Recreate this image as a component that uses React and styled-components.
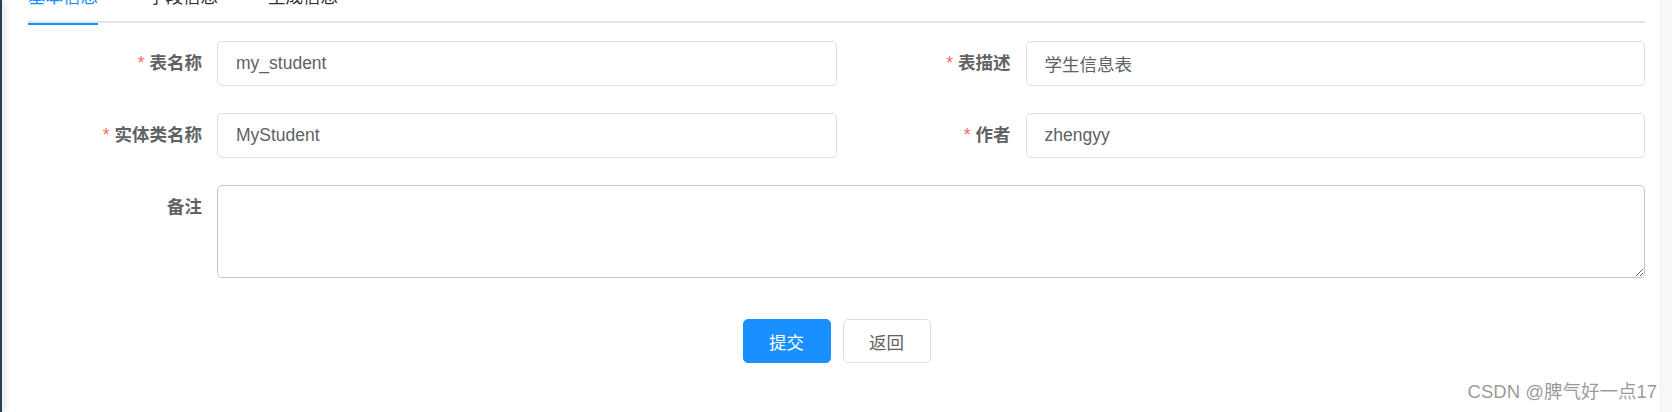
import React from "react";
import styled, { createGlobalStyle } from "styled-components";

const GlobalStyle = createGlobalStyle`
  html, body {
    margin: 0;
    padding: 0;
    background: #fff;
    overflow: hidden;
  }
  body {
    font-family: "Liberation Sans", "Noto Sans CJK SC", sans-serif;
  }
`;

const Layout = styled.div`
  display: flex;
  height: 412px;
  position: relative;
`;

const SideEdge = styled.div`
  width: 2px;
  flex-shrink: 0;
  background: #2f3b4f;
  box-shadow: 2px 0 6px rgba(0, 21, 41, 0.3);
  z-index: 1;
`;

const ScrollTrack = styled.div`
  width: 11px;
  flex-shrink: 0;
  background: #f6f7f9;
  border-left: 1px solid #f0f1f3;
`;

const Main = styled.main`
  flex: 1;
  padding: 0 15px 0 26px;
  overflow: hidden;
`;

const TabNav = styled.div`
  display: flex;
  height: 50px;
  margin-top: -27px;
  border-bottom: 2px solid #e4e7ed;
  box-sizing: border-box;
  margin-bottom: 18px;
`;

const Tab = styled.div`
  height: 50px;
  line-height: 48px;
  padding: 0 25px;
  font-size: 17.5px;
  color: ${(p) => (p.$active ? "#1890ff" : "#303133")};
  position: relative;
  box-sizing: border-box;

  &:first-child {
    padding-left: 0;
  }

  &::after {
    content: "";
    display: ${(p) => (p.$active ? "block" : "none")};
    position: absolute;
    left: 0;
    right: 25px;
    bottom: -2px;
    height: 2px;
    background: #1890ff;
  }
`;

const Grid = styled.div`
  display: grid;
  grid-template-columns: 1fr 1fr;
  row-gap: 27px;
`;

const Item = styled.div`
  display: flex;
  align-items: flex-start;
  grid-column: ${(p) => (p.$full ? "1 / 3" : "auto")};
`;

const Label = styled.label`
  width: 189px;
  flex-shrink: 0;
  box-sizing: border-box;
  padding-right: 15px;
  text-align: right;
  line-height: 45px;
  font-size: 17.5px;
  font-weight: 700;
  color: #606266;
`;

const Star = styled.span`
  color: #f56c6c;
  font-weight: 400;
  margin-right: 5px;
`;

const Input = styled.input`
  flex: 1;
  min-width: 0;
  height: 45px;
  box-sizing: border-box;
  border: 1px solid #dcdfe6;
  border-radius: 5px;
  padding: 0 18px;
  font-family: inherit;
  font-size: 17.5px;
  color: #606266;
  background: #fff;
  outline: none;
`;

const TextArea = styled.textarea`
  flex: 1;
  min-width: 0;
  height: 93px;
  box-sizing: border-box;
  border: 1px solid #c0c4cc;
  border-radius: 5px;
  padding: 6px 18px;
  font-family: inherit;
  font-size: 17.5px;
  color: #606266;
  resize: vertical;
  outline: none;
`;

const Actions = styled.div`
  display: flex;
  justify-content: center;
  gap: 12px;
  margin-top: 41px;
`;

const Button = styled.button`
  width: 88px;
  height: 44px;
  border-radius: 5px;
  font-family: inherit;
  font-size: 17.5px;
  cursor: pointer;
  border: 1px solid ${(p) => (p.$primary ? "#1890ff" : "#dcdfe6")};
  background: ${(p) => (p.$primary ? "#1890ff" : "#fff")};
  color: ${(p) => (p.$primary ? "#fff" : "#606266")};
`;

const Watermark = styled.div`
  position: absolute;
  right: 15px;
  bottom: 9px;
  font-size: 18.5px;
  color: rgba(120, 120, 120, 0.75);
  pointer-events: none;
`;

const fields = [
  { label: "表名称", value: "my_student", required: true },
  { label: "表描述", value: "学生信息表", required: true },
  { label: "实体类名称", value: "MyStudent", required: true },
  { label: "作者", value: "zhengyy", required: true },
];

export default function App() {
  return (
    <>
      <GlobalStyle />
      <Layout>
        <SideEdge />
        <Main>
          <TabNav>
            <Tab $active>基本信息</Tab>
            <Tab>字段信息</Tab>
            <Tab>生成信息</Tab>
          </TabNav>
          <Grid>
            {fields.map((f) => (
              <Item key={f.label}>
                <Label>
                  {f.required && <Star>*</Star>}
                  {f.label}
                </Label>
                <Input defaultValue={f.value} />
              </Item>
            ))}
            <Item $full>
              <Label>备注</Label>
              <TextArea />
            </Item>
          </Grid>
          <Actions>
            <Button $primary>提交</Button>
            <Button>返回</Button>
          </Actions>
        </Main>
        <ScrollTrack />
        <Watermark>CSDN @脾气好一点17</Watermark>
      </Layout>
    </>
  );
}
